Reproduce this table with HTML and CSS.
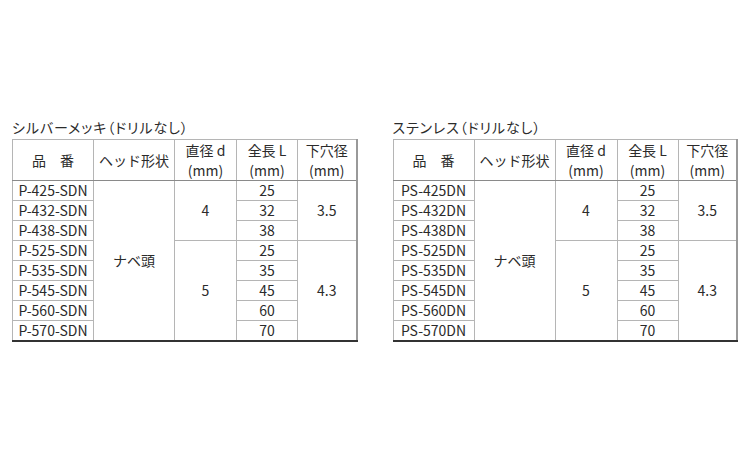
FILE: index.html
```html
<!DOCTYPE html>
<html lang="ja">
<head>
<meta charset="utf-8">
<link rel="stylesheet" href="styles.css">
</head>
<body>
<div class="page">
  <section class="block">
    <h2 class="title">シルバーメッキ（ドリルなし）</h2>
    <table class="spec">
      <colgroup><col class="c1"><col class="c2"><col class="c3"><col class="c4"><col class="c5"></colgroup>
      <thead>
        <tr><th>品　番</th><th>ヘッド形状</th><th>直径 d<br>(mm)</th><th>全長 L<br>(mm)</th><th>下穴径<br>(mm)</th></tr>
      </thead>
      <tbody>
        <tr><td>P-425-SDN</td><td rowspan="8">ナベ頭</td><td rowspan="3">4</td><td>25</td><td rowspan="3">3.5</td></tr>
        <tr><td>P-432-SDN</td><td>32</td></tr>
        <tr><td>P-438-SDN</td><td>38</td></tr>
        <tr><td>P-525-SDN</td><td rowspan="5">5</td><td>25</td><td rowspan="5">4.3</td></tr>
        <tr><td>P-535-SDN</td><td>35</td></tr>
        <tr><td>P-545-SDN</td><td>45</td></tr>
        <tr><td>P-560-SDN</td><td>60</td></tr>
        <tr><td>P-570-SDN</td><td>70</td></tr>
      </tbody>
    </table>
  </section>
  <section class="block">
    <h2 class="title">ステンレス（ドリルなし）</h2>
    <table class="spec">
      <colgroup><col class="c1"><col class="c2"><col class="c3"><col class="c4"><col class="c5"></colgroup>
      <thead>
        <tr><th>品　番</th><th>ヘッド形状</th><th>直径 d<br>(mm)</th><th>全長 L<br>(mm)</th><th>下穴径<br>(mm)</th></tr>
      </thead>
      <tbody>
        <tr><td>PS-425DN</td><td rowspan="8">ナベ頭</td><td rowspan="3">4</td><td>25</td><td rowspan="3">3.5</td></tr>
        <tr><td>PS-432DN</td><td>32</td></tr>
        <tr><td>PS-438DN</td><td>38</td></tr>
        <tr><td>PS-525DN</td><td rowspan="5">5</td><td>25</td><td rowspan="5">4.3</td></tr>
        <tr><td>PS-535DN</td><td>35</td></tr>
        <tr><td>PS-545DN</td><td>45</td></tr>
        <tr><td>PS-560DN</td><td>60</td></tr>
        <tr><td>PS-570DN</td><td>70</td></tr>
      </tbody>
    </table>
  </section>
</div>
</body>
</html>
```
FILE: styles.css
```css
html, body {
  margin: 0;
  padding: 0;
  background: #ffffff;
}
body {
  font-family: "Noto Sans CJK JP", "Noto Sans", sans-serif;
  color: #2b2b2b;
}
.page {
  display: flex;
  gap: 35px;
  padding: 118px 0 0 12px;
}
.block {
  display: flex;
  flex-direction: column;
}
.title {
  margin: 0 0 2px 0;
  font-size: 14px;
  font-weight: normal;
  line-height: 19px;
  font-feature-settings: "palt";
  letter-spacing: 0.9px;
}
.spec {
  border-collapse: collapse;
  table-layout: fixed;
  width: 345px;
  border-top: 1px solid #666;
  border-left: 1px solid #555;
  border-right: 2px solid #999;
  border-bottom: 2px solid #333;
}
.c1 { width: 81px; }
.c2 { width: 81px; }
.c3 { width: 62px; }
.c4 { width: 61px; }
.c5 { width: 59px; }
.spec th, .spec td {
  padding: 0;
  text-align: center;
  vertical-align: middle;
  font-weight: normal;
  border: 1px solid #b5b5b5;
  overflow: hidden;
  white-space: nowrap;
}
.spec th {
  height: 39px;
  font-size: 14px;
  line-height: 20px;
  border-bottom: 1px solid #8a8a8a;
}
.spec td {
  height: 19px;
  font-size: 14px;
  line-height: 19px;
}
```
